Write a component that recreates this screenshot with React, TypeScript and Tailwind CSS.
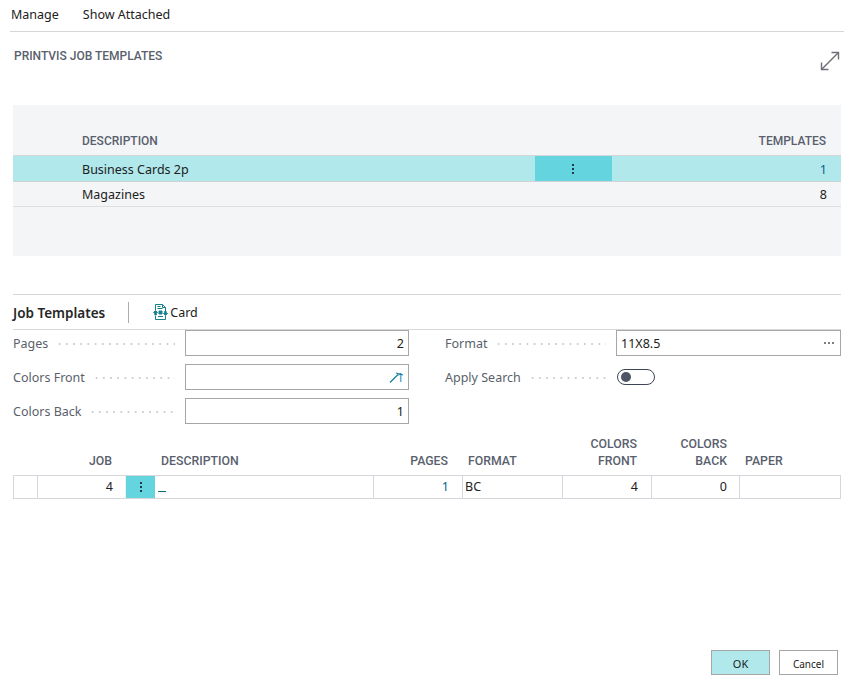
import type { ReactNode } from 'react';

const body = 'font-["Noto_Sans",sans-serif]';
const heading = 'font-["Roboto",sans-serif] font-medium text-[12px] text-[#5a5f6e]';
const subHeading = 'font-["Roboto",sans-serif] font-medium text-[12.3px] text-[#5a5f6e]';
const text = 'text-[12.5px]';

function Kebab({ className = '' }: { className?: string }) {
  return (
    <span className={`flex flex-col gap-[2px] ${className}`}>
      <span className="w-[2px] h-[2px] bg-[#1f3a48]" />
      <span className="w-[2px] h-[2px] bg-[#1f3a48]" />
      <span className="w-[2px] h-[2px] bg-[#1f3a48]" />
    </span>
  );
}

function ExpandIcon() {
  return (
    <svg width="20" height="20" viewBox="0 0 20 20" fill="none" stroke="#6f6f78" strokeWidth="1.4">
      <path d="M1.5 18.5 18.5 1.5" />
      <path d="M11.5 1.5h7v7" />
      <path d="M1.5 11.5v7h7" />
    </svg>
  );
}

function CardIcon() {
  return (
    <svg width="15" height="16" viewBox="0 0 15 16" fill="none" stroke="#16808c" strokeWidth="1">
      <path d="M2.500 6V.5h7l3 3V7" />
      <path d="M9.500.5v3h3" />
      <path d="M4.500 2.500h3M4.500 4.500h5" />
      <path d="M.5 8.500 2.500 6.500l2 2H3.300v2.500h-1.500V8.500z" fill="#16808c" />
      <path d="M14.500 9.500 12.500 11.500l-2-2h1.200V7.500h1.500v2z" fill="#16808c" />
      <path d="M2.500 12v3.500h10V12" />
      <path d="M6 7h3v3H6z" fill="#16808c" />
      <path d="M5 12.500h5" />
    </svg>
  );
}

function FieldRow({ label, children, gapped, low }: { label: string; children: ReactNode; gapped?: boolean; low?: boolean }) {
  return (
    <div className={`flex items-center h-[26px] ${gapped ? 'mt-[8px]' : ''}`}>
      <span className={`${text} text-[#5a5f6b] whitespace-nowrap ${low ? 'pt-[3px]' : 'pt-[2px]'}`}>{label}</span>
      <span className="flex-1 ml-[8px] mr-[10px] mt-[1px] h-[2px] bg-[radial-gradient(circle,#cdd0d4_0.8px,transparent_1px)] bg-[length:7.2px_2px]" />
      {children}
    </div>
  );
}

function Input({ children, className = '' }: { children?: ReactNode; className?: string }) {
  return (
    <div className={`h-[26px] border border-[#a6a6a6] flex items-center px-[4px] pt-[2px] ${text} text-[#212121] ${className}`}>
      {children}
    </div>
  );
}

const cell = `border-l border-[#d5d7dc] flex items-center h-full ${text} px-[4px]`;

export default function App() {
  return (
    <div className={`${body} w-[851px] h-[685px] bg-white flex flex-col overflow-hidden text-[#212121]`}>
      {/* Action bar */}
      <div className={`ml-[10px] mr-[7px] h-[32px] border-b border-[#d6d6d6] flex items-center gap-[24px] pl-px pb-px ${text}`}>
        <span>Manage</span>
        <span>Show Attached</span>
      </div>

      {/* Title */}
      <div className="h-[73px] pl-[14px] pr-[11px] flex justify-between">
        <span className={`${heading} mt-[16px] leading-[16px] whitespace-nowrap`}>PRINTVIS JOB TEMPLATES</span>
        <span className="mt-[19px]"><ExpandIcon /></span>
      </div>

      {/* Top list */}
      <div className="mx-[13px] mr-[10px] h-[151px] bg-[#f4f5f7]">
        <div className="h-[51px] flex items-end justify-between border-b border-[#d5d7dc] pl-[69px] pr-[15px] pb-[5px]">
          <span className={heading}>DESCRIPTION</span>
          <span className={heading}>TEMPLATES</span>
        </div>
        <div className={`h-[26px] bg-[#b0e8eb] border-b border-[#cfd3d6] flex items-center ${text} relative`}>
          <span className="w-[522px] pl-[69px] pt-[3px]">Business Cards 2p</span>
          <span className="w-[77px] h-full bg-[#64d5de] flex items-center justify-center"><Kebab className="mr-[2px]" /></span>
          <span className="flex-1 text-right pr-[14px] pt-[3px] text-[#0f5f8a]">1</span>
        </div>
        <div className={`h-[25px] border-b border-[#dcdee1] flex items-center justify-between pl-[69px] pr-[14px] pt-[2px] ${text}`}>
          <span>Magazines</span>
          <span>8</span>
        </div>
      </div>

      {/* Job Templates part */}
      <div className="ml-[13px] mr-[10px] mt-[38px] border-t border-[#d6d6d6]">
        <div className="h-[35px] border-b border-[#d6d8dc] flex items-center">
          <span className="text-[13.500px] font-semibold text-[#262626] pt-[2px]">Job Templates</span>
          <span className="ml-[23px] w-px h-[21px] bg-[#a9adb3]" />
          <span className={`ml-[24px] flex items-center gap-[2px] ${text}`}>
            <CardIcon />
            <span className="pt-[2px]">Card</span>
          </span>
        </div>

        <div className="grid grid-cols-[396px_396px] gap-x-[36px]">
          <div className="flex flex-col">
            <FieldRow label="Pages">
              <Input className="w-[224px] justify-end">2</Input>
            </FieldRow>
            <FieldRow label="Colors Front" gapped>
              <Input className="w-[224px] justify-end relative">
                <span className="text-[#2f8fc0]">1</span>
                <svg className="absolute right-[3px] top-[6px]" width="16" height="13" viewBox="0 0 16 13" fill="none" stroke="#0f7f96" strokeWidth="1.300">
                  <path d="M1 11.500 9 3.500" />
                  <path d="M7 2 14 4" />
                </svg>
              </Input>
            </FieldRow>
            <FieldRow label="Colors Back" gapped low>
              <Input className="w-[224px] justify-end">1</Input>
            </FieldRow>
          </div>
          <div className="flex flex-col">
            <FieldRow label="Format">
              <Input className="w-[225px] justify-between">
                11X8.5
                <span className="flex gap-[2px] mb-[2px] mr-[2px]">
                  <span className="w-[2px] h-[2px] rounded-full bg-[#555]" />
                  <span className="w-[2px] h-[2px] rounded-full bg-[#555]" />
                  <span className="w-[2px] h-[2px] rounded-full bg-[#555]" />
                </span>
              </Input>
            </FieldRow>
            <FieldRow label="Apply Search" gapped>
              <div className="w-[225px]">
                <span className="ml-px w-[38px] h-[16px] border border-[#3d4654] rounded-full flex items-center pl-[3px]">
                  <span className="w-[10px] h-[10px] rounded-full bg-[#4d5566]" />
                </span>
              </div>
            </FieldRow>
          </div>
        </div>

        {/* Job lines */}
        <div className="mt-[12px] grid grid-cols-[24px_88px_30px_218px_89px_100px_89px_88px_102px]">
          <div />
          <div className={`${subHeading} self-end text-right pr-[13px] pb-[5px]`}>JOB</div>
          <div />
          <div className={`${subHeading} self-end pl-[6px] pb-[5px]`}>DESCRIPTION</div>
          <div className={`${subHeading} self-end text-right pr-[14px] pb-[5px]`}>PAGES</div>
          <div className={`${subHeading} self-end pl-[6px] pb-[5px]`}>FORMAT</div>
          <div className={`${subHeading} self-end text-right pr-[14px] pb-[5px] leading-[17px]`}>COLORS<br />FRONT</div>
          <div className={`${subHeading} self-end text-right pr-[12px] pb-[5px] leading-[17px]`}>COLORS<br />BACK</div>
          <div className={`${subHeading} self-end pl-[6px] pb-[5px]`}>PAPER</div>

          <div className="col-span-9 grid grid-cols-subgrid h-[24px] border-y border-r border-[#d5d7dc]">
            <div className={cell} />
            <div className={`${cell} justify-end pr-[12px] pt-px`}>4</div>
            <div className="bg-[#64d5de] h-full flex items-center justify-center border-l border-[#eef0f2]"><Kebab /></div>
            <div className="flex items-end h-full pl-[3px] pb-[6px]">
              <span className="w-[8px] h-px bg-[#0f6a6f]" />
            </div>
            <div className={`${cell} justify-end pr-[13px] pt-px text-[#0f5f8a]`}>1</div>
            <div className={`${cell} pl-[2px] pt-px`}>BC</div>
            <div className={`${cell} justify-end pr-[13px] pt-px`}>4</div>
            <div className={`${cell} justify-end pr-[12px] pt-px`}>0</div>
            <div className={cell} />
          </div>
        </div>
      </div>

      {/* Footer */}
      <div className="mt-auto mb-[10px] mr-[13px] flex justify-end gap-[9px]">
        <button className="w-[59px] h-[25px] pt-[3px] text-[11px] bg-[#b0e8eb] border border-[#a6a6a6]">OK</button>
        <button className="w-[59px] h-[25px] pt-[3px] text-[10px] bg-white border border-[#a6a6a6]">Cancel</button>
      </div>
    </div>
  );
}
